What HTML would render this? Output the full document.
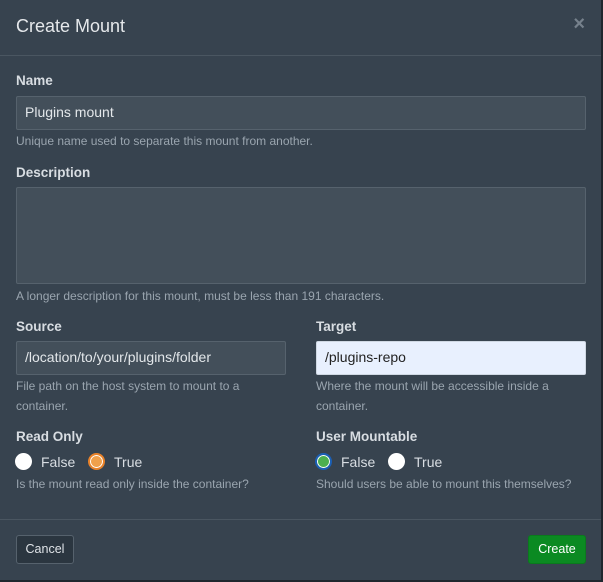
<!DOCTYPE html>
<html><head><style>
body{margin:0;width:603px;height:582px;background:#1f272e;font-family:"Liberation Sans",sans-serif;overflow:hidden;position:relative}
.m{position:absolute;left:0;top:0;width:601px;height:580px;background:#37434f}
.a{position:absolute;white-space:nowrap}
.t{font-size:18px;color:#e5e8eb;left:16px;top:16px}
.x{right:16px;top:13px;color:#76818c;font-size:20px;font-weight:bold}
.hr{position:absolute;left:0;width:601px;height:1px;background:#4a5661}
.l{font-size:13.5px;font-weight:bold;color:#d8dde2}
.h{font-size:12px;color:#9aa5af;line-height:20px}
.i{position:absolute;background:#434f5a;border:1px solid #56626d;border-radius:2px;box-sizing:border-box;color:#e3e7ea;font-size:14px;padding-left:8px;line-height:31px}
.r{position:absolute;width:17px;height:17px;border-radius:50%;background:#fff;box-sizing:border-box}
.rt{font-size:14px;color:#d8dde2}
</style></head><body>
<div class="m">
<div class="a t">Create Mount</div>
<div class="a x">×</div>
<div class="hr" style="top:55px"></div>
<div class="a l" style="left:16px;top:73px">Name</div>
<div class="i" style="left:16px;top:96px;width:570px;height:34px">Plugins mount</div>
<div class="a h" style="left:16px;top:131px">Unique name used to separate this mount from another.</div>
<div class="a l" style="left:16px;top:165px">Description</div>
<div class="i" style="left:16px;top:187px;width:570px;height:97px"></div>
<div class="a h" style="left:16px;top:286px">A longer description for this mount, must be less than 191 characters.</div>
<div class="a l" style="left:16px;top:319px">Source</div>
<div class="i" style="left:16px;top:341px;width:270px;height:34px">/location/to/your/plugins/folder</div>
<div class="a h" style="left:16px;top:376px">File path on the host system to mount to a<br>container.</div>
<div class="a l" style="left:316px;top:319px">Target</div>
<div class="i" style="left:316px;top:341px;width:270px;height:34px;background:#e8f0fe;border-color:#cfd8e3;color:#222">/plugins-repo</div>
<div class="a h" style="left:316px;top:376px">Where the mount will be accessible inside a<br>container.</div>
<div class="a l" style="left:16px;top:429px">Read Only</div>
<div class="r" style="left:15px;top:453px"></div><div class="a rt" style="left:41px;top:454px">False</div>
<div class="r" style="left:88px;top:453px;background:#f0a04b;border:2px solid #e8822a;box-shadow:inset 0 0 0 1px #fff"></div><div class="a rt" style="left:114px;top:454px">True</div>
<div class="a h" style="left:16px;top:474px">Is the mount read only inside the container?</div>
<div class="a l" style="left:316px;top:429px">User Mountable</div>
<div class="r" style="left:315px;top:453px;background:#4caf50;border:2px solid #1b5fb5;box-shadow:inset 0 0 0 1px #fff"></div><div class="a rt" style="left:341px;top:454px">False</div>
<div class="r" style="left:388px;top:453px"></div><div class="a rt" style="left:414px;top:454px">True</div>
<div class="a h" style="left:316px;top:474px">Should users be able to mount this themselves?</div>
<div class="hr" style="top:519px"></div>
<div class="a" style="left:16px;top:535px;width:58px;height:29px;box-sizing:border-box;background:#2b3640;border:1px solid #56626d;border-radius:3px;color:#dfe3e7;font-size:12.5px;text-align:center;line-height:27px">Cancel</div>
<div class="a" style="left:528px;top:535px;width:58px;height:29px;box-sizing:border-box;background:#0b8a22;border:1px solid #0a7a1d;border-radius:3px;color:#fff;font-size:12.5px;text-align:center;line-height:27px">Create</div>
</div>
</body></html>
